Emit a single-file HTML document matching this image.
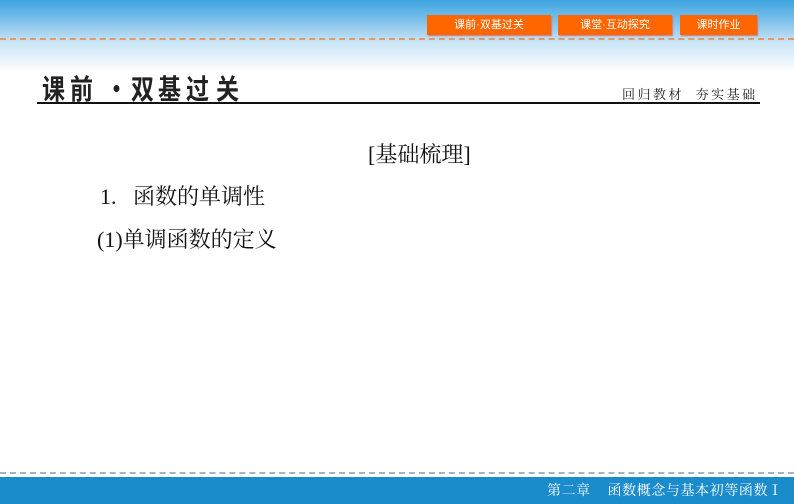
<!DOCTYPE html>
<html><head><meta charset="utf-8"><style>
body{margin:0;width:794px;height:504px;position:relative;overflow:hidden;background:#fff;font-family:"Liberation Serif","Noto Serif CJK SC",serif}
.hdr{position:absolute;left:0;top:0;width:794px;height:75px;background:linear-gradient(#3da4e0 0px,#7cc0ea 20px,#c9e4f6 42px,#fff 72px)}
.dash{position:absolute;left:0;width:794px;height:0;border-top:2px dashed #e39a6a}
.btn{position:absolute;top:15px;height:20px;background:#ff6600;color:#fff;font:11px "Liberation Sans","Noto Sans CJK SC",sans-serif;line-height:20px;text-align:center;box-shadow:1px 1px 1px #c77}
.title{position:absolute;top:70px;font:bold 23px "Noto Sans CJK SC",sans-serif;color:#222;line-height:28px;white-space:nowrap;transform:scaleY(1.2);transform-origin:0 0}
.line{position:absolute;left:37px;top:102px;width:723px;height:2px;background:#111}
.sub{position:absolute;left:622px;top:84px;font:13px "Noto Serif CJK SC",serif;color:#222;letter-spacing:2.5px;white-space:nowrap}
.t{position:absolute;font-size:22px;color:#111;line-height:26px;white-space:nowrap}
.foot{position:absolute;left:0;top:477px;width:794px;height:27px;background:#1a8ccb;color:#fff;font:14px "Noto Serif CJK SC",serif;line-height:27px;letter-spacing:0.6px}
</style></head><body>
<div class="hdr"></div>
<div class="btn" style="left:427px;width:124px">课前·双基过关</div>
<div class="btn" style="left:558px;width:114px">课堂·互动探究</div>
<div class="btn" style="left:680px;width:77px">课时作业</div>
<div class="dash" style="top:38px"></div>
<div class="title" style="left:42px">课</div>
<div class="title" style="left:70px">前</div>
<div class="title" style="left:105px">·</div>
<div class="title" style="left:131px">双</div>
<div class="title" style="left:158px">基</div>
<div class="title" style="left:186px">过</div>
<div class="title" style="left:216px">关</div>
<div class="sub">回归教材&nbsp; 夯实基础</div>
<div class="line"></div>
<div class="t" style="left:368px;top:142px">[基础梳理]</div>
<div class="t" style="left:100px;top:184px">1.</div>
<div class="t" style="left:133px;top:184px">函数的单调性</div>
<div class="t" style="left:97px;top:227px">(1)单调函数的定义</div>
<div class="dash" style="top:472px;border-top-color:#9bb7c8"></div>
<div class="foot"><span style="position:absolute;left:547px">第二章&nbsp;&nbsp;&nbsp; 函数概念与基本初等函数Ⅰ</span></div>
</body></html>
